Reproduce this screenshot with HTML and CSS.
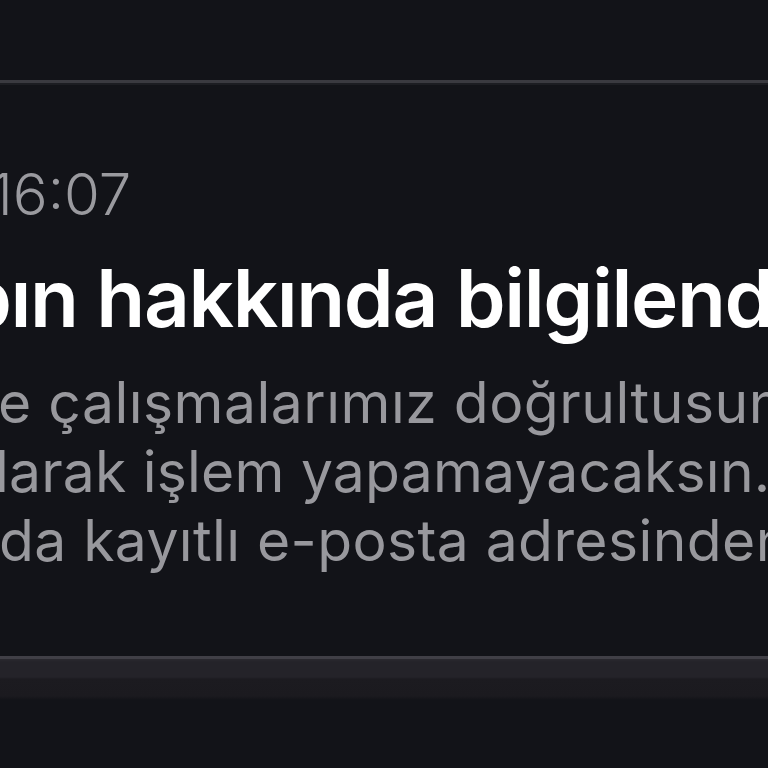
FILE: index.html
```html
<!DOCTYPE html>
<html lang="tr">
<head>
<meta charset="utf-8">
<title>Bildirim</title>
<link rel="stylesheet" href="styles.css">
</head>
<body>
<div class="screen">
  <div class="top-space"></div>
  <div class="divider"></div>
  <div class="message">
    <div class="time">16:07</div>
    <div class="title">bın hakkında bilgilendirme</div>
    <div class="body">
      <div class="line line1">e çalışmalarımız doğrultusunda</div>
      <div class="line line2">larak işlem yapamayacaksın.</div>
      <div class="line line3">da kayıtlı e-posta adresinden</div>
    </div>
  </div>
  <div class="bottom-bar"></div>
</div>
</body>
</html>
```
FILE: styles.css
```css
html, body {
  margin: 0;
  padding: 0;
  background: #121318;
}
.screen {
  width: 768px;
  height: 768px;
  overflow: hidden;
  background: #121318;
  font-family: Inter, "Noto Sans", sans-serif;
  display: flex;
  flex-direction: column;
}
.top-space {
  height: 80px;
  flex: none;
}
.divider {
  height: 3px;
  background: #3a3a40;
  border-bottom: 2px solid #1c1d22;
  flex: none;
}
.message {
  flex: none;
  padding-top: 74px;
  height: 571px;
  box-sizing: border-box;
  overflow: hidden;
  white-space: nowrap;
}
.time {
  font-size: 58px;
  line-height: 70px;
  font-weight: 300;
  color: #9a9a9f;
  margin-left: -10px;
}
.title {
  margin-top: 21px;
  font-size: 80px;
  line-height: 96px;
  font-weight: 600;
  letter-spacing: -1.4px;
  color: #ffffff;
  margin-left: -38px;
}
.body {
  margin-top: 22px;
  color: #98989d;
  font-size: 57px;
  line-height: 69px;
  font-weight: 400;
  letter-spacing: 0.5px;
}
.line1 { margin-left: -2px; }
.line2 { margin-left: -5px; letter-spacing: 0.2px; }
.line3 { margin-left: -1px; letter-spacing: 0.4px; }
.bottom-bar {
  flex: none;
  height: 44px;
  background: linear-gradient(#403f46 0, #403f46 3px, #2a292f 3px, #242329 6px, #242329 21px, #1c1b20 23px, #1b1a1f 40px, #121318 44px);
}
```
